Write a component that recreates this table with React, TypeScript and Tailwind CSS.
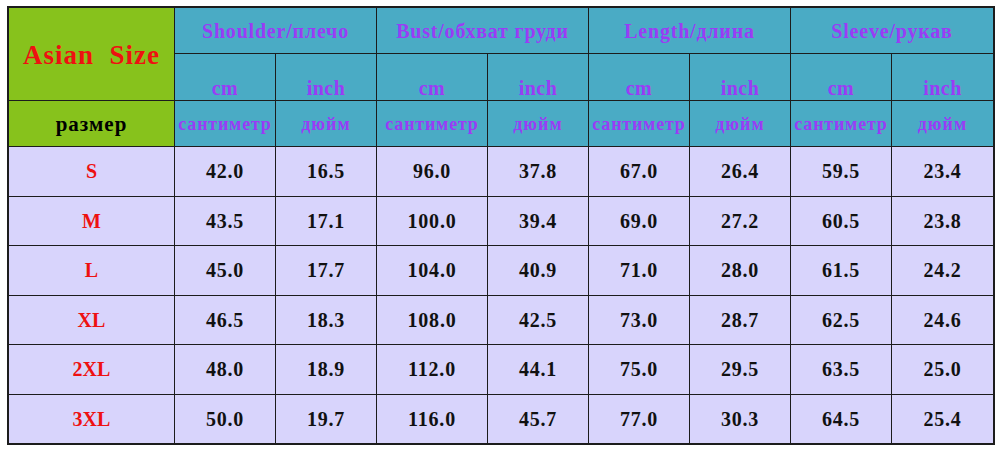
import React from "react";

const heads = ["Shoulder/плечо", "Bust/обхват груди", "Length/длина", "Sleeve/рукав"];
const rows: [string, string[]][] = [
  ["S", ["42.0", "16.5", "96.0", "37.8", "67.0", "26.4", "59.5", "23.4"]],
  ["M", ["43.5", "17.1", "100.0", "39.4", "69.0", "27.2", "60.5", "23.8"]],
  ["L", ["45.0", "17.7", "104.0", "40.9", "71.0", "28.0", "61.5", "24.2"]],
  ["XL", ["46.5", "18.3", "108.0", "42.5", "73.0", "28.7", "62.5", "24.6"]],
  ["2XL", ["48.0", "18.9", "112.0", "44.1", "75.0", "29.5", "63.5", "25.0"]],
  ["3XL", ["50.0", "19.7", "116.0", "45.7", "77.0", "30.3", "64.5", "25.4"]],
];

export default function App() {
  return (
    <div className="w-[1000px] h-[450px] bg-white pt-[6px] pl-[7px]" style={{ fontFamily: '"Liberation Serif", "DejaVu Serif", serif' }}>
      <div className="grid w-[988px] border-2 border-[#1c1c1c] bg-[#1c1c1c] gap-px font-bold grid-cols-[165px_100px_100px_110px_100px_100px_100px_100px_101px] grid-rows-[45px_46px_45px_repeat(6,48.5px)]">
        <div className="row-span-2 bg-[#87c21c] flex items-center justify-center text-[#ee1111] text-[27px] tracking-[1px] whitespace-pre pt-[2px]">Asian  Size</div>
        {heads.map((h) => (
          <div key={h} className="col-span-2 bg-[#4aabc5] flex items-center justify-center text-[#9a3cf5] text-[20px] tracking-[0.8px] pt-[1px] whitespace-nowrap">{h}</div>
        ))}
        {heads.map((h) => (
          <React.Fragment key={h + "u"}>
            <div className="bg-[#4aabc5] flex items-end justify-center text-[#9a3cf5] text-[20px] tracking-[0.5px] leading-none pb-[2px]">cm</div>
            <div className="bg-[#4aabc5] flex items-end justify-center text-[#9a3cf5] text-[20px] tracking-[0.5px] leading-none pb-[2px]">inch</div>
          </React.Fragment>
        ))}
        <div className="bg-[#87c21c] flex items-center justify-center text-black text-[21px] tracking-[1px] pt-[3px]">размер</div>
        {heads.map((h) => (
          <React.Fragment key={h + "r"}>
            <div className="bg-[#4aabc5] flex items-center justify-center text-[#9a3cf5] text-[18px] tracking-[0.8px] whitespace-nowrap pt-[2px]">сантиметр</div>
            <div className="bg-[#4aabc5] flex items-center justify-center text-[#9a3cf5] text-[18px] tracking-[1px] pt-[2px]">дюйм</div>
          </React.Fragment>
        ))}
        {rows.map(([s, vals]) => (
          <React.Fragment key={s}>
            <div className="bg-[#d8d4fc] flex items-center justify-center text-[#ee1111] text-[20px]">{s}</div>
            {vals.map((v, i) => (
              <div key={i} className="bg-[#d8d4fc] flex items-center justify-center text-[#111] text-[20px] tracking-[0.8px]">{v}</div>
            ))}
          </React.Fragment>
        ))}
      </div>
    </div>
  );
}
